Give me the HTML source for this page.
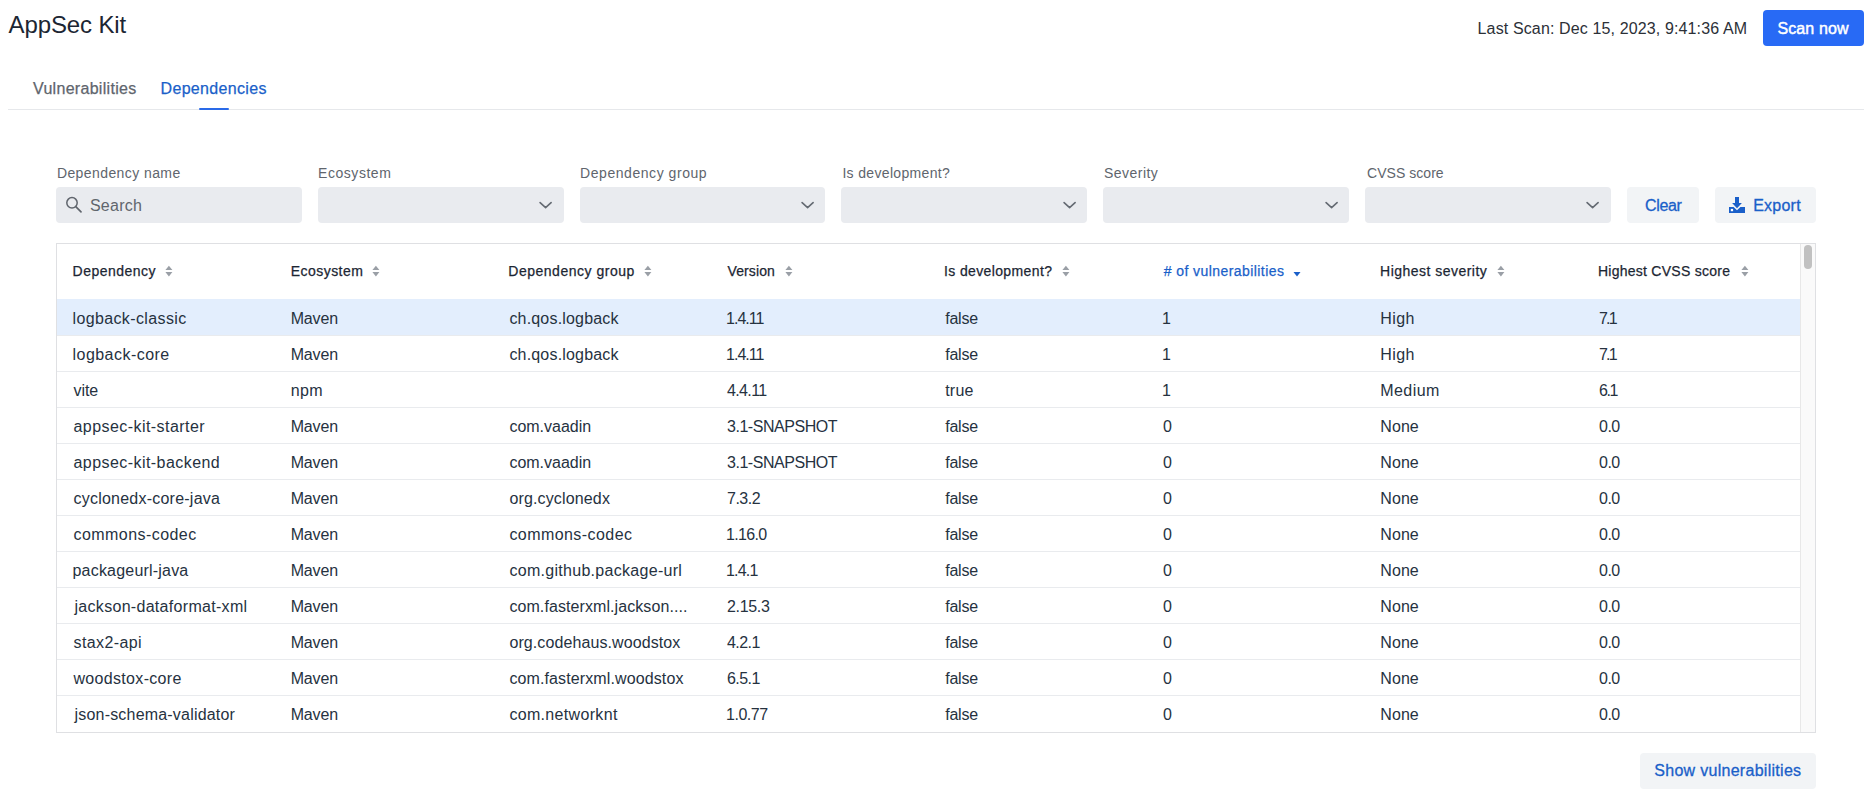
<!DOCTYPE html><html><head><meta charset="utf-8"><title>AppSec Kit</title><style>
*{box-sizing:border-box;margin:0;padding:0}
html,body{width:1870px;height:798px;overflow:hidden;background:#fff;font-family:"Liberation Sans",sans-serif;color:#26323f}
.a{position:absolute;white-space:nowrap}
.t16{font-size:16px;line-height:18px}
.t14{font-size:14px;line-height:16px}
.box{position:absolute;background:#e9ebef;border-radius:4px;height:36px;top:187px}
.btn{position:absolute;background:#f2f4f6;border-radius:4px;height:36px}
.hd{font-size:14px;line-height:16px;color:#1c2633;-webkit-text-stroke:0.25px #1c2633}
</style></head><body>
<div class="a " style="left:8.6px;top:11px;letter-spacing:-0.122px;font-size:24px;line-height:28px;color:#1c2633">AppSec Kit</div>
<div class="a t16" style="left:1477.6px;top:19.5px;letter-spacing:0.129px;color:#2c3037">Last Scan: Dec 15, 2023, 9:41:36 AM</div>
<div class="a" style="left:1763px;top:10px;width:101px;height:36px;border-radius:4px;background:#286af5"></div>
<div class="a t16" style="left:1777.5px;top:19.5px;letter-spacing:0.1px;color:#fff;-webkit-text-stroke:0.45px #fff">Scan now</div>
<div class="a t16" style="left:33.0px;top:80px;letter-spacing:0.3px;color:#60656d;-webkit-text-stroke:0.25px #60656d">Vulnerabilities</div>
<div class="a t16" style="left:160.5px;top:80px;letter-spacing:0.336px;color:#1a5fc9;-webkit-text-stroke:0.25px #1a5fc9">Dependencies</div>
<div class="a" style="left:8px;top:109px;width:1856px;height:1px;background:#e6e8eb"></div>
<div class="a" style="left:199px;top:108px;width:30px;height:2px;border-radius:1px;background:#2a6ae8"></div>
<div class="a t14" style="left:56.9px;top:164.6px;letter-spacing:0.414px;color:#60656d">Dependency name</div>
<div class="box" style="left:56.0px;width:245.8px"></div>
<div class="a t14" style="left:318.1px;top:164.6px;letter-spacing:0.537px;color:#60656d">Ecosystem</div>
<div class="box" style="left:317.8px;width:245.8px"></div>
<svg class="a" style="left:538.1px;top:201px" width="14" height="9" viewBox="0 0 14 9"><path d="M2.1 1.6 L7.6 6.6 L13.1 1.6" fill="none" stroke="#646a72" stroke-width="1.6" stroke-linecap="round" stroke-linejoin="round"/></svg>
<div class="a t14" style="left:580.1px;top:164.6px;letter-spacing:0.547px;color:#60656d">Dependency group</div>
<div class="box" style="left:579.6px;width:245.8px"></div>
<svg class="a" style="left:799.9px;top:201px" width="14" height="9" viewBox="0 0 14 9"><path d="M2.1 1.6 L7.6 6.6 L13.1 1.6" fill="none" stroke="#646a72" stroke-width="1.6" stroke-linecap="round" stroke-linejoin="round"/></svg>
<div class="a t14" style="left:842.4px;top:164.6px;letter-spacing:0.336px;color:#60656d">Is development?</div>
<div class="box" style="left:841.4px;width:245.8px"></div>
<svg class="a" style="left:1061.7px;top:201px" width="14" height="9" viewBox="0 0 14 9"><path d="M2.1 1.6 L7.6 6.6 L13.1 1.6" fill="none" stroke="#646a72" stroke-width="1.6" stroke-linecap="round" stroke-linejoin="round"/></svg>
<div class="a t14" style="left:1104.1px;top:164.6px;letter-spacing:0.443px;color:#60656d">Severity</div>
<div class="box" style="left:1103.2px;width:245.8px"></div>
<svg class="a" style="left:1323.5px;top:201px" width="14" height="9" viewBox="0 0 14 9"><path d="M2.1 1.6 L7.6 6.6 L13.1 1.6" fill="none" stroke="#646a72" stroke-width="1.6" stroke-linecap="round" stroke-linejoin="round"/></svg>
<div class="a t14" style="left:1367.0px;top:164.6px;letter-spacing:0.044px;color:#60656d">CVSS score</div>
<div class="box" style="left:1365.0px;width:245.8px"></div>
<svg class="a" style="left:1585.3px;top:201px" width="14" height="9" viewBox="0 0 14 9"><path d="M2.1 1.6 L7.6 6.6 L13.1 1.6" fill="none" stroke="#646a72" stroke-width="1.6" stroke-linecap="round" stroke-linejoin="round"/></svg>
<svg class="a" style="left:65px;top:196px" width="18" height="18" viewBox="0 0 18 18"><circle cx="7" cy="6.8" r="5.2" fill="none" stroke="#60656d" stroke-width="1.5"/><path d="M10.8 10.6 L16 15.8" stroke="#60656d" stroke-width="1.7" stroke-linecap="round"/></svg>
<div class="a t16" style="left:89.9px;top:197px;letter-spacing:0.28px;color:#60656d">Search</div>
<div class="btn" style="left:1627px;top:187px;width:72px"></div>
<div class="a t16" style="left:1644.9px;top:196.6px;letter-spacing:-0.3px;color:#1a5fc9;-webkit-text-stroke:0.3px #1a5fc9">Clear</div>
<div class="btn" style="left:1715px;top:187px;width:101px"></div>
<svg class="a" style="left:1729px;top:197px" width="16" height="16" viewBox="0 0 16 16"><path d="M6 0 H10 V6 H12.9 L8 11.3 L3.1 6 H6 Z" fill="#1a5fc9"/><path d="M0 10 H4.6 L8 13.3 L11.4 10 H16 V16 H0 Z" fill="#1a5fc9"/><rect x="1.8" y="11.9" width="2.3" height="2.3" fill="#fff"/></svg>
<div class="a t16" style="left:1753.2px;top:196.6px;letter-spacing:0.24px;color:#1a5fc9;-webkit-text-stroke:0.3px #1a5fc9">Export</div>
<div class="a" style="left:56px;top:243px;width:1760px;height:490px;border:1px solid #dfe0e3"></div>
<div class="a" style="left:1800px;top:244px;width:15px;height:488px;background:#fafafa;border-left:1px solid #e8e8e8"></div>
<div class="a" style="left:1804px;top:245px;width:8px;height:24px;border-radius:4px;background:#c1c1c1"></div>
<div class="a hd" style="left:72.6px;top:263.1px;color:#1c2633;-webkit-text-stroke-color:#1c2633;letter-spacing:0.467px">Dependency</div>
<div class="a hd" style="left:290.8px;top:263.1px;color:#1c2633;-webkit-text-stroke-color:#1c2633;letter-spacing:0.45px">Ecosystem</div>
<div class="a hd" style="left:508.3px;top:263.1px;color:#1c2633;-webkit-text-stroke-color:#1c2633;letter-spacing:0.513px">Dependency group</div>
<div class="a hd" style="left:727.5px;top:263.1px;color:#1c2633;-webkit-text-stroke-color:#1c2633;letter-spacing:0.117px">Version</div>
<div class="a hd" style="left:944.0px;top:263.1px;color:#1c2633;-webkit-text-stroke-color:#1c2633;letter-spacing:0.371px">Is development?</div>
<div class="a hd" style="left:1163.7px;top:263.1px;color:#1a5fc9;-webkit-text-stroke-color:#1a5fc9;letter-spacing:0.432px"># of vulnerabilities</div>
<div class="a hd" style="left:1380.1px;top:263.1px;color:#1c2633;-webkit-text-stroke-color:#1c2633;letter-spacing:0.473px">Highest severity</div>
<div class="a hd" style="left:1597.9px;top:263.1px;color:#1c2633;-webkit-text-stroke-color:#1c2633;letter-spacing:0.265px">Highest CVSS score</div>
<svg class="a" style="left:165px;top:265px" width="8" height="12" viewBox="0 0 8 12"><path d="M0.4 5.1 L7.4 5.1 L3.9 0.8 Z M0.4 6.9 L7.4 6.9 L3.9 11.6 Z" fill="#9a9fa6"/></svg>
<svg class="a" style="left:372px;top:265px" width="8" height="12" viewBox="0 0 8 12"><path d="M0.4 5.1 L7.4 5.1 L3.9 0.8 Z M0.4 6.9 L7.4 6.9 L3.9 11.6 Z" fill="#9a9fa6"/></svg>
<svg class="a" style="left:644px;top:265px" width="8" height="12" viewBox="0 0 8 12"><path d="M0.4 5.1 L7.4 5.1 L3.9 0.8 Z M0.4 6.9 L7.4 6.9 L3.9 11.6 Z" fill="#9a9fa6"/></svg>
<svg class="a" style="left:785px;top:265px" width="8" height="12" viewBox="0 0 8 12"><path d="M0.4 5.1 L7.4 5.1 L3.9 0.8 Z M0.4 6.9 L7.4 6.9 L3.9 11.6 Z" fill="#9a9fa6"/></svg>
<svg class="a" style="left:1062px;top:265px" width="8" height="12" viewBox="0 0 8 12"><path d="M0.4 5.1 L7.4 5.1 L3.9 0.8 Z M0.4 6.9 L7.4 6.9 L3.9 11.6 Z" fill="#9a9fa6"/></svg>
<svg class="a" style="left:1293px;top:271px" width="8" height="6" viewBox="0 0 8 6"><path d="M0.5 1 L7.5 1 L4 5.5 Z" fill="#1a5fc9"/></svg>
<svg class="a" style="left:1497px;top:265px" width="8" height="12" viewBox="0 0 8 12"><path d="M0.4 5.1 L7.4 5.1 L3.9 0.8 Z M0.4 6.9 L7.4 6.9 L3.9 11.6 Z" fill="#9a9fa6"/></svg>
<svg class="a" style="left:1741px;top:265px" width="8" height="12" viewBox="0 0 8 12"><path d="M0.4 5.1 L7.4 5.1 L3.9 0.8 Z M0.4 6.9 L7.4 6.9 L3.9 11.6 Z" fill="#9a9fa6"/></svg>
<div class="a" style="left:57px;top:299px;width:1743px;height:36px;background:#e3eefd"></div>
<div class="a t16" style="left:72.5px;top:310.3px;letter-spacing:0.371px;">logback-classic</div>
<div class="a t16" style="left:290.7px;top:310.3px;letter-spacing:-0.15px;">Maven</div>
<div class="a t16" style="left:509.4px;top:310.3px;letter-spacing:0.185px;">ch.qos.logback</div>
<div class="a t16" style="left:726.0px;top:310.3px;letter-spacing:-0.98px;">1.4.11</div>
<div class="a t16" style="left:945.2px;top:310.3px;letter-spacing:-0.225px;">false</div>
<div class="a t16" style="left:1162.0px;top:310.3px;letter-spacing:0.0px;">1</div>
<div class="a t16" style="left:1380.3px;top:310.3px;letter-spacing:0.4px;">High</div>
<div class="a t16" style="left:1599.0px;top:310.3px;letter-spacing:-1.8px;">7.1</div>
<div class="a" style="left:57px;top:335px;width:1743px;height:1px;background:#e9ebee"></div>
<div class="a t16" style="left:72.5px;top:346.3px;letter-spacing:0.464px;">logback-core</div>
<div class="a t16" style="left:290.7px;top:346.3px;letter-spacing:-0.15px;">Maven</div>
<div class="a t16" style="left:509.4px;top:346.3px;letter-spacing:0.185px;">ch.qos.logback</div>
<div class="a t16" style="left:726.0px;top:346.3px;letter-spacing:-0.98px;">1.4.11</div>
<div class="a t16" style="left:945.2px;top:346.3px;letter-spacing:-0.225px;">false</div>
<div class="a t16" style="left:1162.0px;top:346.3px;letter-spacing:0.0px;">1</div>
<div class="a t16" style="left:1380.3px;top:346.3px;letter-spacing:0.4px;">High</div>
<div class="a t16" style="left:1599.0px;top:346.3px;letter-spacing:-1.8px;">7.1</div>
<div class="a" style="left:57px;top:371px;width:1743px;height:1px;background:#e9ebee"></div>
<div class="a t16" style="left:73.5px;top:382.3px;letter-spacing:-0.067px;">vite</div>
<div class="a t16" style="left:290.7px;top:382.3px;letter-spacing:0.35px;">npm</div>
<div class="a t16" style="left:727.0px;top:382.3px;letter-spacing:-0.64px;">4.4.11</div>
<div class="a t16" style="left:945.2px;top:382.3px;letter-spacing:0.233px;">true</div>
<div class="a t16" style="left:1162.0px;top:382.3px;letter-spacing:0.0px;">1</div>
<div class="a t16" style="left:1380.3px;top:382.3px;letter-spacing:0.42px;">Medium</div>
<div class="a t16" style="left:1599.0px;top:382.3px;letter-spacing:-1.45px;">6.1</div>
<div class="a" style="left:57px;top:407px;width:1743px;height:1px;background:#e9ebee"></div>
<div class="a t16" style="left:73.5px;top:418.3px;letter-spacing:0.441px;">appsec-kit-starter</div>
<div class="a t16" style="left:290.7px;top:418.3px;letter-spacing:-0.15px;">Maven</div>
<div class="a t16" style="left:509.4px;top:418.3px;letter-spacing:0.0px;">com.vaadin</div>
<div class="a t16" style="left:727.0px;top:418.3px;letter-spacing:-0.464px;">3.1-SNAPSHOT</div>
<div class="a t16" style="left:945.2px;top:418.3px;letter-spacing:-0.225px;">false</div>
<div class="a t16" style="left:1163.0px;top:418.3px;letter-spacing:0.0px;">0</div>
<div class="a t16" style="left:1380.3px;top:418.3px;letter-spacing:0.067px;">None</div>
<div class="a t16" style="left:1599.0px;top:418.3px;letter-spacing:-0.5px;">0.0</div>
<div class="a" style="left:57px;top:443px;width:1743px;height:1px;background:#e9ebee"></div>
<div class="a t16" style="left:73.5px;top:454.3px;letter-spacing:0.441px;">appsec-kit-backend</div>
<div class="a t16" style="left:290.7px;top:454.3px;letter-spacing:-0.15px;">Maven</div>
<div class="a t16" style="left:509.4px;top:454.3px;letter-spacing:0.0px;">com.vaadin</div>
<div class="a t16" style="left:727.0px;top:454.3px;letter-spacing:-0.464px;">3.1-SNAPSHOT</div>
<div class="a t16" style="left:945.2px;top:454.3px;letter-spacing:-0.225px;">false</div>
<div class="a t16" style="left:1163.0px;top:454.3px;letter-spacing:0.0px;">0</div>
<div class="a t16" style="left:1380.3px;top:454.3px;letter-spacing:0.067px;">None</div>
<div class="a t16" style="left:1599.0px;top:454.3px;letter-spacing:-0.5px;">0.0</div>
<div class="a" style="left:57px;top:479px;width:1743px;height:1px;background:#e9ebee"></div>
<div class="a t16" style="left:73.5px;top:490.3px;letter-spacing:0.228px;">cyclonedx-core-java</div>
<div class="a t16" style="left:290.7px;top:490.3px;letter-spacing:-0.15px;">Maven</div>
<div class="a t16" style="left:509.4px;top:490.3px;letter-spacing:0.15px;">org.cyclonedx</div>
<div class="a t16" style="left:727.0px;top:490.3px;letter-spacing:-0.5px;">7.3.2</div>
<div class="a t16" style="left:945.2px;top:490.3px;letter-spacing:-0.225px;">false</div>
<div class="a t16" style="left:1163.0px;top:490.3px;letter-spacing:0.0px;">0</div>
<div class="a t16" style="left:1380.3px;top:490.3px;letter-spacing:0.067px;">None</div>
<div class="a t16" style="left:1599.0px;top:490.3px;letter-spacing:-0.5px;">0.0</div>
<div class="a" style="left:57px;top:515px;width:1743px;height:1px;background:#e9ebee"></div>
<div class="a t16" style="left:73.5px;top:526.3px;letter-spacing:0.442px;">commons-codec</div>
<div class="a t16" style="left:290.7px;top:526.3px;letter-spacing:-0.15px;">Maven</div>
<div class="a t16" style="left:509.4px;top:526.3px;letter-spacing:0.433px;">commons-codec</div>
<div class="a t16" style="left:726.0px;top:526.3px;letter-spacing:-0.68px;">1.16.0</div>
<div class="a t16" style="left:945.2px;top:526.3px;letter-spacing:-0.225px;">false</div>
<div class="a t16" style="left:1163.0px;top:526.3px;letter-spacing:0.0px;">0</div>
<div class="a t16" style="left:1380.3px;top:526.3px;letter-spacing:0.067px;">None</div>
<div class="a t16" style="left:1599.0px;top:526.3px;letter-spacing:-0.5px;">0.0</div>
<div class="a" style="left:57px;top:551px;width:1743px;height:1px;background:#e9ebee"></div>
<div class="a t16" style="left:72.5px;top:562.3px;letter-spacing:0.2px;">packageurl-java</div>
<div class="a t16" style="left:290.7px;top:562.3px;letter-spacing:-0.15px;">Maven</div>
<div class="a t16" style="left:509.4px;top:562.3px;letter-spacing:0.295px;">com.github.package-url</div>
<div class="a t16" style="left:726.0px;top:562.3px;letter-spacing:-0.825px;">1.4.1</div>
<div class="a t16" style="left:945.2px;top:562.3px;letter-spacing:-0.225px;">false</div>
<div class="a t16" style="left:1163.0px;top:562.3px;letter-spacing:0.0px;">0</div>
<div class="a t16" style="left:1380.3px;top:562.3px;letter-spacing:0.067px;">None</div>
<div class="a t16" style="left:1599.0px;top:562.3px;letter-spacing:-0.5px;">0.0</div>
<div class="a" style="left:57px;top:587px;width:1743px;height:1px;background:#e9ebee"></div>
<div class="a t16" style="left:74.5px;top:598.3px;letter-spacing:0.3px;">jackson-dataformat-xml</div>
<div class="a t16" style="left:290.7px;top:598.3px;letter-spacing:-0.15px;">Maven</div>
<div class="a t16" style="left:509.4px;top:598.3px;letter-spacing:0.083px;">com.fasterxml.jackson....</div>
<div class="a t16" style="left:727.0px;top:598.3px;letter-spacing:-0.34px;">2.15.3</div>
<div class="a t16" style="left:945.2px;top:598.3px;letter-spacing:-0.225px;">false</div>
<div class="a t16" style="left:1163.0px;top:598.3px;letter-spacing:0.0px;">0</div>
<div class="a t16" style="left:1380.3px;top:598.3px;letter-spacing:0.067px;">None</div>
<div class="a t16" style="left:1599.0px;top:598.3px;letter-spacing:-0.5px;">0.0</div>
<div class="a" style="left:57px;top:623px;width:1743px;height:1px;background:#e9ebee"></div>
<div class="a t16" style="left:73.5px;top:634.3px;letter-spacing:0.4px;">stax2-api</div>
<div class="a t16" style="left:290.7px;top:634.3px;letter-spacing:-0.15px;">Maven</div>
<div class="a t16" style="left:509.4px;top:634.3px;letter-spacing:0.095px;">org.codehaus.woodstox</div>
<div class="a t16" style="left:727.0px;top:634.3px;letter-spacing:-0.55px;">4.2.1</div>
<div class="a t16" style="left:945.2px;top:634.3px;letter-spacing:-0.225px;">false</div>
<div class="a t16" style="left:1163.0px;top:634.3px;letter-spacing:0.0px;">0</div>
<div class="a t16" style="left:1380.3px;top:634.3px;letter-spacing:0.067px;">None</div>
<div class="a t16" style="left:1599.0px;top:634.3px;letter-spacing:-0.5px;">0.0</div>
<div class="a" style="left:57px;top:659px;width:1743px;height:1px;background:#e9ebee"></div>
<div class="a t16" style="left:73.5px;top:670.3px;letter-spacing:0.317px;">woodstox-core</div>
<div class="a t16" style="left:290.7px;top:670.3px;letter-spacing:-0.15px;">Maven</div>
<div class="a t16" style="left:509.4px;top:670.3px;letter-spacing:0.114px;">com.fasterxml.woodstox</div>
<div class="a t16" style="left:727.0px;top:670.3px;letter-spacing:-0.55px;">6.5.1</div>
<div class="a t16" style="left:945.2px;top:670.3px;letter-spacing:-0.225px;">false</div>
<div class="a t16" style="left:1163.0px;top:670.3px;letter-spacing:0.0px;">0</div>
<div class="a t16" style="left:1380.3px;top:670.3px;letter-spacing:0.067px;">None</div>
<div class="a t16" style="left:1599.0px;top:670.3px;letter-spacing:-0.5px;">0.0</div>
<div class="a" style="left:57px;top:695px;width:1743px;height:1px;background:#e9ebee"></div>
<div class="a t16" style="left:74.5px;top:706.3px;letter-spacing:0.195px;">json-schema-validator</div>
<div class="a t16" style="left:290.7px;top:706.3px;letter-spacing:-0.15px;">Maven</div>
<div class="a t16" style="left:509.4px;top:706.3px;letter-spacing:0.325px;">com.networknt</div>
<div class="a t16" style="left:726.0px;top:706.3px;letter-spacing:-0.46px;">1.0.77</div>
<div class="a t16" style="left:945.2px;top:706.3px;letter-spacing:-0.225px;">false</div>
<div class="a t16" style="left:1163.0px;top:706.3px;letter-spacing:0.0px;">0</div>
<div class="a t16" style="left:1380.3px;top:706.3px;letter-spacing:0.067px;">None</div>
<div class="a t16" style="left:1599.0px;top:706.3px;letter-spacing:-0.5px;">0.0</div>
<div class="btn" style="left:1640px;top:753px;width:176px"></div>
<div class="a t16" style="left:1654.3px;top:762.1px;letter-spacing:0.284px;color:#1a5fc9;-webkit-text-stroke:0.3px #1a5fc9">Show vulnerabilities</div>
</body></html>
